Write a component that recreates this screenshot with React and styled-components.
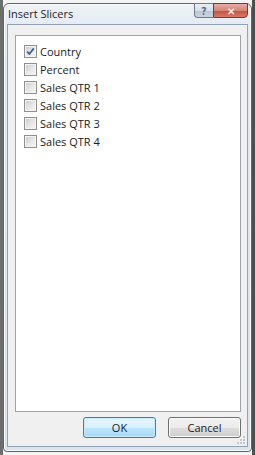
import React, { useState } from 'react';
import styled, { createGlobalStyle } from 'styled-components';

const GlobalStyle = createGlobalStyle`
  html, body {
    margin: 0;
    padding: 0;
    background: #ffffff;
  }
  body {
    font-family: "Open Sans", "Noto Sans", "Liberation Sans", sans-serif;
  }
`;

const Page = styled.div`
  width: 255px;
  height: 455px;
  box-sizing: border-box;
  padding: 3px 3px 3px 3px;
  background: linear-gradient(to right, #6d6d6d 0, #6d6d6d 3px, #f4f4f4 3px, #f4f4f4 252px, #4e4e4e 252px);
`;

const Window = styled.div`
  width: 249px;
  height: 449px;
  box-sizing: border-box;
  border: 1px solid #5b6675;
  border-radius: 6px 6px 4px 4px;
  background: linear-gradient(to bottom, #eef2f7 0, #e2e9f1 30px, #d9e3ee 100%);
  box-shadow: inset 0 0 0 1px #f7fafd;
  padding: 0 3px 4px 3px;
  display: flex;
  flex-direction: column;
`;

const TitleBar = styled.div`
  height: 20px;
  display: flex;
  align-items: flex-start;
  justify-content: space-between;
`;

const Title = styled.div`
  font-size: 11px;
  color: #1e1e1e;
  padding: 3px 0 0 1px;
  line-height: 14px;
`;

const Controls = styled.div`
  display: flex;
  margin-top: -1px;
`;

const CaptionButton = styled.div`
  height: 15px;
  box-sizing: border-box;
  border: 1px solid #6d7b8d;
  display: flex;
  align-items: center;
  justify-content: center;
  font-size: 10px;
  font-weight: bold;
  line-height: 1;
`;

const HelpButton = styled(CaptionButton)`
  width: 19px;
  border-right: none;
  border-radius: 0 0 0 4px;
  color: #52616f;
  background: linear-gradient(to bottom, #e8eef5 0, #d6dfe9 50%, #b9c6d4 51%, #c8d4e1 100%);
`;

const CloseButton = styled(CaptionButton)`
  width: 35px;
  border-radius: 0 0 4px 0;
  border-color: #7a3a32;
  color: #f6e6e2;
  background: linear-gradient(to bottom, #e6ada4 0, #d8857a 50%, #c45040 51%, #d77a66 100%);
`;

const Client = styled.div`
  flex: 1;
  border: 1px solid #93a3b7;
  background: #f0f0f0;
  padding: 10px 6px 8px 7px;
  display: flex;
  flex-direction: column;
  position: relative;
`;

const ListBox = styled.div`
  flex: 1;
  background: #ffffff;
  border: 1px solid #9ba4ad;
  padding: 9px 8px;
  display: flex;
  flex-direction: column;
  gap: 5px;
`;

const Item = styled.label`
  display: flex;
  align-items: center;
  gap: 3px;
  height: 13px;
  font-size: 11px;
  color: #1a1a1a;
  cursor: default;
`;

const Box = styled.span`
  width: 13px;
  height: 13px;
  box-sizing: border-box;
  border: 1px solid #8f8f8f;
  background: #f4f4f4;
  box-shadow: inset 0 0 0 1px #f4f4f4;
  display: flex;
  align-items: center;
  justify-content: center;
  flex: none;
`;

const BoxInner = styled.span`
  width: 9px;
  height: 9px;
  background: linear-gradient(135deg, #cfcfcf 0, #e9e9e9 60%, #f4f4f4 100%);
  display: flex;
  align-items: center;
  justify-content: center;
`;

const ButtonRow = styled.div`
  display: flex;
  justify-content: flex-end;
  gap: 12px;
  margin-top: 5px;
`;

const Button = styled.button`
  width: 73px;
  height: 21px;
  box-sizing: border-box;
  padding: 0;
  font-family: inherit;
  font-size: 11px;
  color: #1a1a1a;
  border-radius: 3px;
  border: 1px solid ${p => (p.$primary ? '#3c7fb1' : '#707070')};
  background: ${p => (p.$primary
    ? 'linear-gradient(to bottom, #eaf6fd 0, #d9f0fc 50%, #bee6fd 51%, #a7d9f5 100%)'
    : 'linear-gradient(to bottom, #f2f2f2 0, #ebebeb 50%, #dddddd 51%, #cfcfcf 100%)')};
  box-shadow: inset 0 0 0 1px ${p => (p.$primary ? '#c8ebfb' : '#fbfbfb')};
`;

const Grip = styled.svg`
  position: absolute;
  right: 1px;
  bottom: 1px;
`;

const Check = () => (
  <svg width="9" height="9" viewBox="0 0 9 9">
    <path d="M1.2 4.6 L3.4 7 L7.8 1.4" stroke="#3b5a9a" strokeWidth="1.7" fill="none" strokeLinejoin="round" />
  </svg>
);

const fields = ['Country', 'Percent', 'Sales QTR 1', 'Sales QTR 2', 'Sales QTR 3', 'Sales QTR 4'];

const App = () => {
  const [checked, setChecked] = useState({ Country: true });

  const toggle = name => setChecked({ ...checked, [name]: !checked[name] });

  return (
    <Page>
      <GlobalStyle />
      <Window>
        <TitleBar>
          <Title>Insert Slicers</Title>
          <Controls>
            <HelpButton>?</HelpButton>
            <CloseButton>✕</CloseButton>
          </Controls>
        </TitleBar>
        <Client>
          <ListBox>
            {fields.map(f => (
              <Item key={f} onClick={() => toggle(f)}>
                <Box>
                  <BoxInner>{checked[f] && <Check />}</BoxInner>
                </Box>
                {f}
              </Item>
            ))}
          </ListBox>
          <ButtonRow>
            <Button $primary>OK</Button>
            <Button>Cancel</Button>
          </ButtonRow>
          <Grip width="10" height="10" viewBox="0 0 10 10">
            <rect x="7" y="1" width="2" height="2" fill="#c4c8cc" />
            <rect x="4" y="4" width="2" height="2" fill="#c4c8cc" />
            <rect x="7" y="4" width="2" height="2" fill="#c4c8cc" />
            <rect x="1" y="7" width="2" height="2" fill="#c4c8cc" />
            <rect x="4" y="7" width="2" height="2" fill="#c4c8cc" />
            <rect x="7" y="7" width="2" height="2" fill="#c4c8cc" />
          </Grip>
        </Client>
      </Window>
    </Page>
  );
};

export default App;
